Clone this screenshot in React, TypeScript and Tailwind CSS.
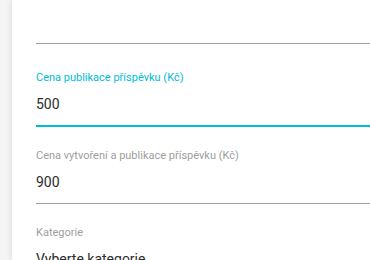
import React from "react";

function Field({
  label,
  value,
  focused,
}: {
  label: string;
  value?: string;
  focused?: boolean;
}) {
  return (
    <div className="flex flex-col">
      <div
        className={
          "h-[14px] text-[11px] leading-[14px] whitespace-nowrap " +
          (focused ? "text-[#00bcd4]" : "text-[#9e9e9e]")
        }
      >
        {label}
      </div>
      <div className="mt-[7px] h-[24px] text-[14px] leading-[24px] whitespace-nowrap text-[#2b2b2b]">
        {value}
      </div>
      <div
        className={
          "mt-[9px] " + (focused ? "h-[2px] bg-[#00bcd4]" : "h-px bg-[#9e9e9e]")
        }
      />
    </div>
  );
}

export default function App() {
  return (
    <div
      className="flex h-[260px] w-[370px] overflow-hidden bg-[#f5f5f5]"
      style={{ fontFamily: "Roboto, 'Noto Sans', sans-serif" }}
    >
      <div className="w-[12px] shrink-0" />
      <div className="flex-1 bg-white pl-[24px] shadow-[0_0_6px_rgba(0,0,0,0.14)]">
        <div className="h-[43px]" />
        <div className="h-px bg-[#9e9e9e]" />
        <div className="mt-[27px] flex flex-col gap-[22px]">
          <Field label="Cena publikace příspěvku (Kč)" value="500" focused />
          <Field label="Cena vytvoření a publikace příspěvku (Kč)" value="900" />
          <Field label="Kategorie" value="Vyberte kategorie" />
        </div>
      </div>
    </div>
  );
}
